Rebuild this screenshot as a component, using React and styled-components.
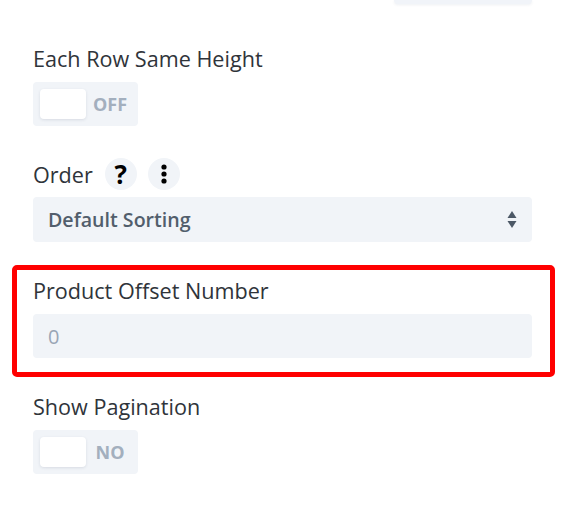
import React from "react";
import styled, { createGlobalStyle } from "styled-components";

const GlobalStyle = createGlobalStyle`
  html, body {
    margin: 0;
    padding: 0;
    background: #ffffff;
  }
  body {
    font-family: "Open Sans", "Noto Sans", sans-serif;
  }
`;

const Panel = styled.div`
  width: 499px;
  padding: 0 0 40px 33px;
  display: flex;
  flex-direction: column;
`;

// bottom edge of the control above, cut off by the window
const TopStub = styled.div`
  align-self: flex-end;
  width: 138px;
  height: 4px;
  background: #f1f4f9;
  border-radius: 0 0 4px 4px;
  box-shadow: 0 1px 3px rgba(40, 60, 100, 0.08);
  margin-bottom: 38px;
`;

const Field = styled.div`
  display: flex;
  flex-direction: column;
  margin-bottom: 32px;
`;

// red highlight drawn round one field
const Highlight = styled(Field)`
  border: 5px solid #ff0000;
  border-radius: 5px;
  margin: -9px -23px 13px -21px;
  padding: 4px 18px 14px 16px;
`;

const LabelRow = styled.div`
  display: flex;
  align-items: center;
  height: 32px;
  margin-bottom: ${({ tall }) => (tall ? "7px" : "8px")};
`;

const Label = styled.label`
  font-size: 21.6px;
  font-weight: 500;
  line-height: 30px;
  padding-top: ${({ tall }) => (tall ? "1px" : "2px")};
  color: #2f343a;
`;

const IconButton = styled.span`
  width: 32px;
  height: 32px;
  border-radius: 50%;
  background: #f1f4f8;
  display: flex;
  align-items: center;
  justify-content: center;
  margin-left: ${({ first }) => (first ? "12px" : "11px")};
  color: #000;
  font-size: 26px;
  font-weight: 700;
  line-height: 1;
`;

const Toggle = styled.div`
  width: 105px;
  height: 44px;
  box-sizing: border-box;
  background: #f1f4f8;
  border-radius: 4px;
  display: flex;
  align-items: center;
  padding: 0 4px 0 7px;
`;

const Knob = styled.span`
  width: 46px;
  height: 30px;
  background: #ffffff;
  border-radius: 4px;
  box-shadow: 0 1px 3px rgba(30, 50, 80, 0.12);
`;

const ToggleText = styled.span`
  flex: 1;
  text-align: center;
  font-size: 18px;
  font-weight: 700;
  color: #a3afbe;
`;

const Select = styled.div`
  height: 45px;
  box-sizing: border-box;
  background: #f1f4f8;
  border-radius: 4px;
  display: flex;
  align-items: center;
  justify-content: space-between;
  padding: 0 15px;
  font-size: 19.6px;
  font-weight: 600;
  color: #525e6c;
`;

const Input = styled.div`
  height: 44px;
  box-sizing: border-box;
  background: #f1f4f8;
  border-radius: 4px;
  display: flex;
  align-items: center;
  padding: 0 15px;
  font-size: 20px;
  font-weight: 500;
  color: #99a5b5;
`;

function SortArrows() {
  return (
    <svg width="10" height="17" viewBox="0 0 10 17">
      <path d="M5 0 L9.5 7 H0.5 Z" fill="#4c5866" />
      <path d="M5 17 L9.5 10 H0.5 Z" fill="#4c5866" />
    </svg>
  );
}

function MoreDots() {
  return (
    <svg width="6" height="20" viewBox="0 0 6 20">
      <circle cx="3" cy="3" r="2.6" fill="#000" />
      <circle cx="3" cy="10" r="2.6" fill="#000" />
      <circle cx="3" cy="17" r="2.6" fill="#000" />
    </svg>
  );
}

function Switch({ text }) {
  return (
    <Toggle>
      <Knob />
      <ToggleText>{text}</ToggleText>
    </Toggle>
  );
}

export default function App() {
  return (
    <>
      <GlobalStyle />
      <Panel>
        <TopStub />

        <Field>
          <LabelRow>
            <Label>Each Row Same Height</Label>
          </LabelRow>
          <Switch text="OFF" />
        </Field>

        <Field>
          <LabelRow tall>
            <Label tall>Order</Label>
            <IconButton first>?</IconButton>
            <IconButton>
              <MoreDots />
            </IconButton>
          </LabelRow>
          <Select>
            <span>Default Sorting</span>
            <SortArrows />
          </Select>
        </Field>

        <Highlight>
          <LabelRow>
            <Label>Product Offset Number</Label>
          </LabelRow>
          <Input>0</Input>
        </Highlight>

        <Field>
          <LabelRow>
            <Label>Show Pagination</Label>
          </LabelRow>
          <Switch text="NO" />
        </Field>
      </Panel>
    </>
  );
}
